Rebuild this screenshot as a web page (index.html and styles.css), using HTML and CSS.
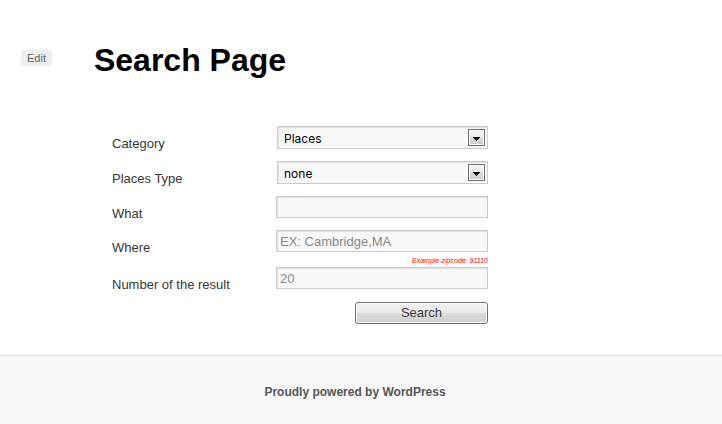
FILE: index.html
```html
<!DOCTYPE html>
<html lang="en">
<head>
<meta charset="utf-8">
<title>Search Page</title>
<link rel="stylesheet" href="styles.css">
</head>
<body>
<main class="page">
  <header class="page-header">
    <a class="edit-link" href="#edit">Edit</a>
    <h1 class="page-title">Search Page</h1>
  </header>
  <form class="search-form">
    <div class="row select-row">
      <label for="category">Category</label>
      <div class="field select-field">
        <select id="category"><option>Places</option><option>Events</option></select>
        <svg class="arrow" viewBox="0 0 17 17" aria-hidden="true"><use href="#drop"/></svg>
      </div>
    </div>
    <div class="row select-row">
      <label for="type">Places Type</label>
      <div class="field select-field">
        <select id="type"><option>none</option></select>
        <svg class="arrow" viewBox="0 0 17 17" aria-hidden="true"><use href="#drop"/></svg>
      </div>
    </div>
    <div class="row">
      <label for="what">What</label>
      <div class="field"><input id="what" type="text"></div>
    </div>
    <div class="row">
      <label for="where">Where</label>
      <div class="field">
        <input id="where" type="text" value="EX: Cambridge,MA" aria-describedby="hint">
        <small class="hint" id="hint">Example-zipcode: 91110</small>
      </div>
    </div>
    <div class="row">
      <label for="count">Number of the result</label>
      <div class="field"><input id="count" type="text" value="20"></div>
    </div>
    <button class="submit" type="submit">Search</button>
  </form>
</main>
<footer class="site-footer"><a href="#wordpress">Proudly powered by WordPress</a></footer>
<svg class="symbols" aria-hidden="true">
  <defs>
    <linearGradient id="face" x1="0" y1="0" x2="0" y2="1">
      <stop offset="0" stop-color="#f2f2f2"/>
      <stop offset="0.5" stop-color="#ebebeb"/>
      <stop offset="0.5" stop-color="#dddddd"/>
      <stop offset="1" stop-color="#cfcfcf"/>
    </linearGradient>
    <symbol id="drop" viewBox="0 0 17 17">
      <rect x="0.5" y="0.5" width="16" height="16" fill="#fcfcfc" stroke="#707070"/>
      <rect x="2" y="2" width="13" height="13" fill="url(#face)"/>
      <path d="M5 8h7v1h-1v1h-1v1h-1v1h-1v-1h-1v-1h-1v-1h-1z" fill="#000" shape-rendering="crispEdges"/>
    </symbol>
  </defs>
</svg>
</body>
</html>
```
FILE: styles.css
```css
* {
  box-sizing: border-box;
}

body {
  display: flex;
  flex-direction: column;
  min-height: 100vh;
  margin: 0;
  background: #fff;
  color: #373737;
  font: 13px/20px "Liberation Sans", Arial, sans-serif;
}

.page {
  padding: 40px 21px 31px;
}

.page-header {
  display: flex;
  align-items: center;
  gap: 42px;
  margin-bottom: 46px;
}

.edit-link {
  padding: 0 6px;
  border-radius: 3px;
  background: #eee;
  color: #666;
  font-size: 11px;
  line-height: 16px;
  text-decoration: none;
  margin-top: -4px;
}

.page-title {
  margin: 0;
  color: #000;
  font-size: 32px;
  line-height: 40px;
}

.search-form {
  display: flex;
  flex-direction: column;
  max-width: 467px;
  padding-left: 91px;
}

.row {
  display: grid;
  grid-template-columns: 164px 1fr;
  align-items: start;
}

.select-row {
  min-height: 35px;
}

label {
  padding-top: 2px;
  line-height: 32px;
}

.field {
  display: flex;
  flex-direction: column;
}

.select-field {
  position: relative;
  padding-left: 1px;
}

input,
select {
  width: 100%;
  height: 22px;
  margin: 0;
  padding: 0 3px;
  border: 1px solid #ccc;
  border-radius: 0;
  background: #f9f9f9;
  box-shadow: inset 1px 1px 1px rgba(0, 0, 0, 0.1);
  color: #888;
  font: inherit;
}

select {
  height: 23px;
  padding: 2px 24px 0 6px;
  appearance: none;
  color: #000;
  font-family: Inter, "Liberation Sans", sans-serif;
  font-size: 12px;
}

.arrow {
  position: absolute;
  top: 3px;
  right: 3px;
  width: 17px;
  height: 17px;
  pointer-events: none;
}

.hint {
  padding-top: 2px;
  color: #f00;
  font-size: 7px;
  font-style: italic;
  line-height: 13px;
  text-align: right;
}

.submit {
  align-self: flex-end;
  width: 133px;
  height: 22px;
  margin-top: 1px;
  padding: 0;
  border: 1px solid #707070;
  border-radius: 3px;
  background: linear-gradient(#f2f2f2, #ebebeb 50%, #ddd 50%, #cfcfcf);
  box-shadow: inset 0 0 0 1px #fcfcfc;
  color: #373737;
  font: inherit;
}

.site-footer {
  flex: 1;
  padding: 26px 52px 20px 40px;
  border-top: 1px solid #ddd;
  background: #f9f9f9;
  font-size: 12px;
  text-align: center;
}

.site-footer a {
  color: #555;
  font-weight: bold;
  text-decoration: none;
}

.symbols {
  position: absolute;
  width: 0;
  height: 0;
}
```
